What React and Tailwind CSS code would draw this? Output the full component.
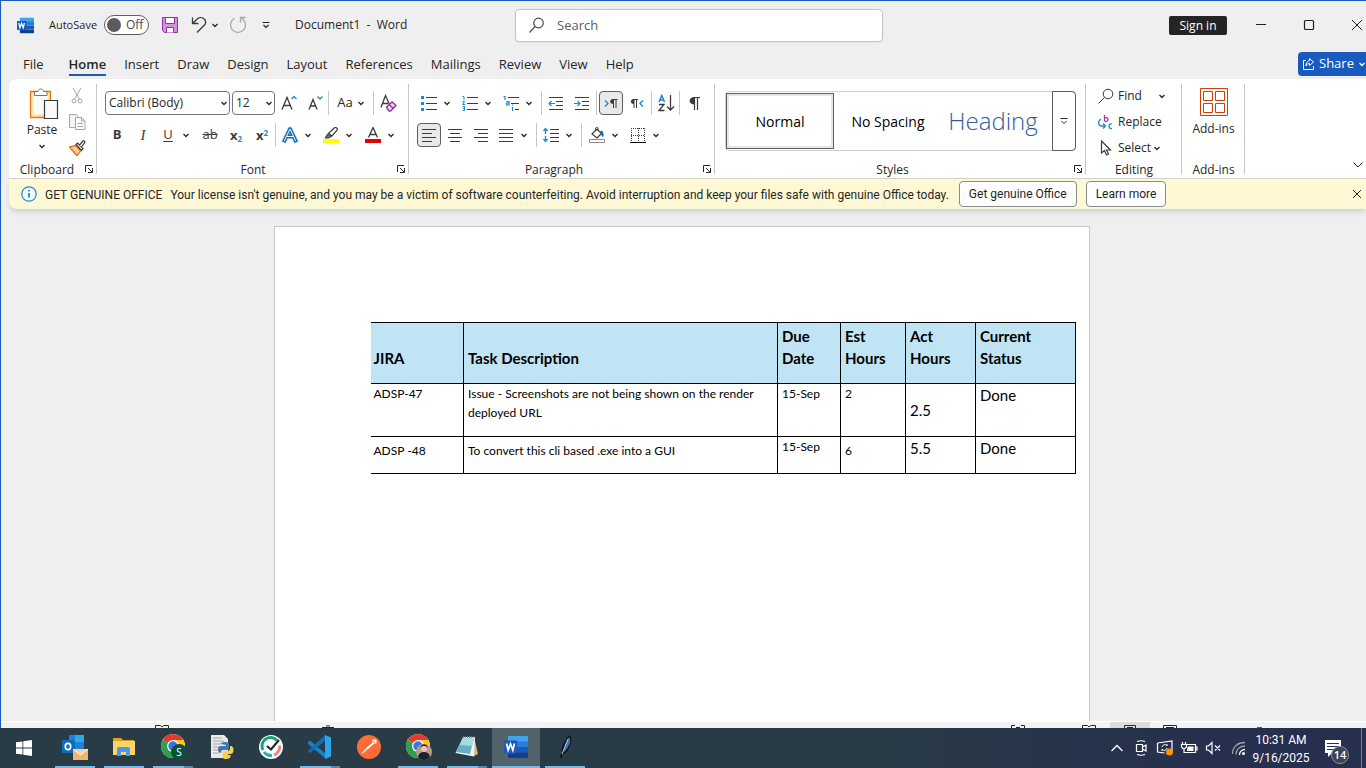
import React from "react";

const cn = (...parts) => parts.filter(Boolean).join(" ");

function Svg({ w = 16, h = 16, children, className, ...rest }) {
  return (
    <svg
      width={w}
      height={h}
      viewBox={`0 0 ${w} ${h}`}
      fill="none"
      stroke="#3b3b3b"
      aria-hidden="true"
      className={cn("shrink-0", className)}
      {...rest}
    >
      {children}
    </svg>
  );
}

const Chevron = ({ stroke = "#262626" }) => (
  <Svg w={8} h={8} stroke={stroke} strokeWidth="1.3">
    <path d="M1.5 3 4 5.5 6.5 3" />
  </Svg>
);

const Divider = ({ className }) => <span className={cn("h-6 w-px shrink-0 bg-[#c8c6c4]", className)} />;

function Tool({ label, children, active, className }) {
  return (
    <button
      type="button"
      aria-label={label}
      className={cn(
        "flex h-6 shrink-0 items-center justify-center",
        active ? "mr-px w-6 rounded border border-[#5f5f5f] bg-[#e9e9e9]" : "w-[26px]",
        className
      )}
    >
      {children}
    </button>
  );
}

function SplitTool({ label, children, className }) {
  return (
    <div className={cn("flex shrink-0", className)}>
      <button type="button" aria-label={label} className="flex h-6 w-6 items-center justify-center">
        {children}
      </button>
      <button type="button" aria-label={`${label} options`} className="flex h-6 w-3 items-center justify-center">
        <Chevron />
      </button>
    </div>
  );
}

function Launcher({ label }) {
  return (
    <button type="button" aria-label={label} className="absolute right-[3px] bottom-1">
      <Svg w={10} h={10} stroke="#262626">
        <path d="M1.5 8V1.5H8M4 4l4 4M8.5 4v4.500H4" />
      </Svg>
    </button>
  );
}

function Group({ label, className, launcher, children }) {
  return (
    <section className={cn("relative flex shrink-0 flex-col justify-between", className)}>
      <div className="pt-[7px]">{children}</div>
      <div className="text-center leading-4">{label}</div>
      {launcher && <Launcher label={`${launcher} settings`} />}
      <span className="absolute top-0 right-0 h-[90px] w-px bg-[#c8c6c4]" />
    </section>
  );
}

function Combo({ label, value, className }) {
  return (
    <div className={cn("relative shrink-0", className)}>
      <select
        aria-label={label}
        defaultValue={value}
        className="block h-6 w-full appearance-none rounded border border-[#767676] bg-white pl-[3px] text-[12px] text-[#262626]"
      >
        <option>{value}</option>
      </select>
      <span className="pointer-events-none absolute top-2 right-[2px]">
        <Chevron />
      </span>
    </div>
  );
}

function WordLogo({ size }) {
  return (
    <svg width={size} height={size} viewBox="0 0 24 24" aria-hidden="true" className="shrink-0">
      <path d="M5 1h18a1 1 0 0 1 1 1v5H4V2a1 1 0 0 1 1-1z" fill="#41a5ee" />
      <path d="M4 6.500h20V12H4z" fill="#2b7cd3" />
      <path d="M4 12h20v5.500H4z" fill="#185abd" />
      <path d="M4 17.500h20V22a1 1 0 0 1-1 1H5a1 1 0 0 1-1-1z" fill="#103f91" />
      <rect x="0" y="5.500" width="13" height="13" rx="1" fill="#185abd" />
      <path d="m2.500 8.500 1.700 6.500L6.500 9 8.800 15l1.700-6.500" fill="none" stroke="#fff" strokeWidth="1.800" />
    </svg>
  );
}

const Lines = ({ rows }) => (
  <Svg>
    <path d={rows.map(([a, b], i) => `M${a} ${2.5 + i * 4}H${b}`).join("")} />
  </Svg>
);

const alignRows = {
  left: [[1, 15], [1, 11], [1, 15], [1, 11]],
  center: [[1, 15], [3, 13], [1, 15], [3, 13]],
  right: [[1, 15], [5, 15], [1, 15], [5, 15]],
  justify: [[1, 15], [1, 15], [1, 15], [1, 15]],
};

function TitleBar() {
  return (
    <header className="relative flex h-12 shrink-0 items-center pl-4">
      <WordLogo size={17} />
      <span className="ml-[15px] w-[55px] text-[11px]">AutoSave</span>
      <button
        type="button"
        role="switch"
        aria-checked="false"
        aria-label="AutoSave"
        className="flex h-5 w-[45px] items-center gap-[5px] rounded-full border border-[#5f5f5f] bg-white pl-[2px] text-[12px] text-[#4a4a4a]"
      >
        <span className="size-3.5 rounded-full bg-[#5c5c5c]" />
        Off
      </button>
      <button type="button" aria-label="Save" className="ml-3">
        <Svg w={18} h={18} stroke="#9332a8">
          <path d="M1.500 1.500h15v15h-13l-2-2z" fill="#d590de" />
          <path d="M4.500 1.500h9v6h-9zM5.500 16.500v-5h7v5" fill="#fff" />
        </Svg>
      </button>
      <button type="button" aria-label="Undo" className="ml-3">
        <Svg w={16} h={18} strokeWidth="1.300">
          <path d="M1.500 1.500v6h6M1.800 7.200 6.500 2.800c2-1.800 5-1.600 6.700.2s1.700 4.500 0 6.300L6 16.500" />
        </Svg>
      </button>
      <button type="button" aria-label="Undo history" className="ml-1">
        <Chevron />
      </button>
      <button type="button" aria-label="Redo" disabled className="ml-[10px]">
        <Svg w={18} h={18} stroke="#a6a6a6" strokeWidth="1.300">
          <path d="M5.500 2.200a7.500 7.500 0 1 0 7 0M11.500 6.500v-5h5" />
        </Svg>
      </button>
      <button type="button" aria-label="Customize toolbar" className="ml-[14px]">
        <Svg w={10} h={10} stroke="#262626" strokeWidth="1.200">
          <path d="M1.500 2.500h7M2.500 5 5 7.500 7.500 5" />
        </Svg>
      </button>
      <h1 className="ml-6 text-[12px] whitespace-pre">Document1  -  Word</h1>
      <label className="absolute top-2 left-[514px] flex h-[33px] w-[368px] items-center gap-3 rounded border border-[#c4c4c4] bg-white pl-3 shadow-xs">
        <Svg w={17} h={17} stroke="#4a4a4a" strokeWidth="1.200">
          <circle cx="10.500" cy="6" r="4.800" />
          <path d="m7 9.500-5.500 6" />
        </Svg>
        <input
          type="search"
          aria-label="Search"
          placeholder="Search"
          className="min-w-0 flex-1 bg-transparent text-[13px] outline-none placeholder:text-[#5c5c5c]"
        />
      </label>
      <div className="ml-auto flex shrink-0 items-center">
        <button type="button" className="mr-6 h-[19px] w-[58px] rounded-[2px] bg-[#242424] text-[12px] leading-[19px] text-white">
          Sign in
        </button>
        <button type="button" aria-label="Minimize" className="mr-8 ml-[2px]">
          <Svg stroke="#1f1f1f">
            <path d="M3 7.500h10" />
          </Svg>
        </button>
        <button type="button" aria-label="Maximize" className="mr-8">
          <Svg stroke="#1f1f1f" strokeWidth="1.200">
            <rect x="3.500" y="3.500" width="9" height="9" rx="1" />
          </Svg>
        </button>
        <button type="button" aria-label="Close" className="mr-px">
          <Svg stroke="#1f1f1f">
            <path d="m3 3 10 10M13 3 3 13" />
          </Svg>
        </button>
      </div>
    </header>
  );
}

const tabs = ["File", "Home", "Insert", "Draw", "Design", "Layout", "References", "Mailings", "Review", "View", "Help"];

function TabStrip() {
  return (
    <nav className="flex h-[30px] shrink-0 items-start pl-[22px] text-[13px]">
      {tabs.map((tab) => (
        <button
          key={tab}
          type="button"
          className={cn(
            "h-[27px] border-b-2 pt-[5px] leading-5",
            tab === "Home" ? "border-[#185abd] font-semibold" : "border-transparent",
            tab === "File" ? "mr-[25px]" : "mr-[18px]"
          )}
        >
          {tab}
        </button>
      ))}
      <button
        type="button"
        className="mt-[3px] ml-auto flex h-6 w-[68px] items-center gap-1 rounded-l bg-[#185abd] pl-1 text-[13px] text-white"
      >
        <Svg w={13} h={14} stroke="#fff">
          <path d="M4 3.500H1.500v9h10V9M7.500 1.500l4 3.500-4 3.500v-2C5.500 6.500 4.500 7.500 4 9c0-3 1.500-5 3.500-5.500z" />
        </Svg>
        Share
        <Chevron stroke="#fff" />
      </button>
    </nav>
  );
}

function ClipboardGroup() {
  return (
    <Group label={<span className="pr-3">Clipboard</span>} className="w-[88px]" launcher="Clipboard">
      <div className="flex pl-4">
        <button type="button" className="flex w-[34px] flex-col items-center text-[12px] leading-4">
          <Svg w={30} h={32} className="-mt-[3px] ml-1">
            <path d="M1.500 3.500h20v26h-20z" fill="#fce3a6" stroke="#e07a10" strokeWidth="1.300" />
            <path d="M4.500 6.500h14v20h-14z" fill="#fafafa" stroke="none" />
            <path d="M5.500 7.500v-4H9c.5-3.500 5-3.500 5.500 0H18v4z" fill="#fff" stroke="#767676" />
            <path d="M15.500 12.500h13v18h-13z" fill="#fafafa" stroke="#3b3b3b" strokeWidth="1.200" />
          </Svg>
          <span className="mt-[2px] mb-1">Paste</span>
          <Chevron />
        </button>
        <div className="-mt-[3px] flex flex-col gap-[10px] pl-[10px]">
          <button type="button" aria-label="Cut" disabled>
            <Svg stroke="#a6a6a6">
              <path d="m4 0 6.500 11M12 0 5.500 11" />
              <circle cx="5" cy="13" r="2" />
              <circle cx="11" cy="13" r="2" />
            </Svg>
          </button>
          <button type="button" aria-label="Copy" disabled>
            <Svg w={17} stroke="#a6a6a6">
              <path d="M6.500 13.500h-6V.5h7l1.500 2" fill="#f5f5f5" />
              <path d="M6.500 3.500h6l3.500 3.500v8.500H6.500zM12.500 3.500V7H16M8.500 9.500H14M8.500 12.500H14" fill="#fafafa" />
            </Svg>
          </button>
          <button type="button" aria-label="Format Painter">
            <Svg w={17}>
              <path d="m.5 7 6-1.500 5 5.500-3.500 5z" fill="#fbd9a8" stroke="#e07a10" strokeWidth="1.300" />
              <path d="M3 10.500 5 8.500M5 12.500l2-2M6.500 14.500l2-2" stroke="#e07a10" />
              <path d="m7 4.500 1.500-1.500 5.500 5.500-1.500 2z" fill="#fff" strokeWidth="1.200" />
              <path d="m10.500 5 3.500-4c.8-.8 2.500.7 1.800 1.600L12.300 7" fill="#fff" strokeWidth="1.200" />
            </Svg>
          </button>
        </div>
      </div>
    </Group>
  );
}

function FontGroup() {
  return (
    <Group label="Font" className="w-[312px]" launcher="Font">
      <div className="flex items-center pl-2">
        <Combo label="Font" value="Calibri (Body)" className="mr-[2px] w-[125px]" />
        <Combo label="Font size" value="12" className="mr-px w-[43px]" />
        <Tool label="Increase font size">
          <Svg>
            <path d="m1 14.500 5-12 5 12M2.500 10.500h7" strokeWidth="1.300" />
            <path d="M10.500 4 13 1.500 15.500 4" stroke="#1e88d0" strokeWidth="1.300" />
          </Svg>
        </Tool>
        <Tool label="Decrease font size">
          <Svg>
            <path d="m2 14.500 4-10 4 10M3.500 11h5" strokeWidth="1.300" />
            <path d="M10.500 1.500 13 4l2.500-2.500" stroke="#1e88d0" strokeWidth="1.300" />
          </Svg>
        </Tool>
        <Divider />
        <button type="button" aria-label="Change case" className="mx-1 flex w-9 items-center justify-center gap-1 text-[13px]">
          <span>Aa</span>
          <Chevron />
        </button>
        <Divider />
        <Tool label="Clear formatting" className="ml-px">
          <Svg w={18} h={18}>
            <path d="m2 13.500 4.500-12 4 9M3.500 9.500h5.500" strokeWidth="1.300" />
            <path d="m7.500 13 5.500-5 4 3.500-5.500 5.500h-1.500z" fill="#f0d6f3" stroke="#9332a8" strokeWidth="1.400" />
            <path d="m10 10.500 4.500 4" stroke="#9332a8" strokeWidth="1.300" />
          </Svg>
        </Tool>
      </div>
      <div className="mt-2 flex items-center pl-[7px] text-[14px] text-[#3b3b3b]">
        <Tool label="Bold">
          <b className="text-[13px]">B</b>
        </Tool>
        <Tool label="Italic">
          <i className="font-['Liberation_Serif',serif] text-[15px]">I</i>
        </Tool>
        <SplitTool label="Underline" className="mr-[5px]">
          <span className="text-[13px] underline underline-offset-2">U</span>
        </SplitTool>
        <Tool label="Strikethrough">
          <span className="text-[13px] line-through">ab</span>
        </Tool>
        <Tool label="Subscript">
          <span className="text-[13px] leading-4 font-bold">
            x<sub className="text-[8px] text-[#1e88d0]">2</sub>
          </span>
        </Tool>
        <Tool label="Superscript">
          <span className="text-[13px] leading-4 font-bold">
            x<sup className="text-[8px] text-[#1e88d0]">2</sup>
          </span>
        </Tool>
        <Divider />
        <SplitTool label="Text effects" className="mr-[5px] ml-[2px]">
          <Svg w={18} h={18} strokeLinejoin="round" strokeLinecap="square">
            <path d="M3.500 14.500 9 3l5.500 11.500M6 10.500h6" stroke="#9ccdf0" strokeWidth="5" />
            <path d="M3.500 14.500 9 3l5.500 11.500M6 10.500h6" stroke="#1467b3" strokeWidth="3.400" />
            <path d="M3.500 14.500 9 3l5.500 11.500M6 10.500h6" stroke="#fff" strokeWidth="1" />
          </Svg>
        </SplitTool>
        <SplitTool label="Highlight color" className="mr-[6px]">
          <Svg>
            <path d="M0 12h16v4H0z" fill="#ffff00" stroke="none" />
            <path d="m5.500 6.500 6-5.700c1.500-1 3.500.8 2.500 2.300L9 9z" fill="#fff" strokeWidth="1.200" />
            <path d="m5 6.500 3.500 3-3 1.500H2z" fill="#6b6b6b" />
          </Svg>
        </SplitTool>
        <SplitTool label="Font color">
          <Svg>
            <path d="M0 12h16v4H0z" fill="#e60000" stroke="none" />
            <path d="M3.500 10.500 8 .5l4.500 10M5 7.500h6" strokeWidth="1.300" />
          </Svg>
        </SplitTool>
      </div>
    </Group>
  );
}

function ParagraphGroup() {
  return (
    <Group label={<span className="pr-4">Paragraph</span>} className="w-[306px]" launcher="Paragraph">
      <div className="flex items-center pl-2">
        <SplitTool label="Bullets" className="mr-[5px]">
          <Svg>
            <path d="M0 1h3v3H0zM0 7h3v3H0zM0 13h3v3H0z" fill="#1e88d0" stroke="none" />
            <path d="M5 2.500h11M5 8.500h11M5 14.500h11" />
          </Svg>
        </SplitTool>
        <SplitTool label="Numbering" className="mr-[5px]">
          <Svg>
            <path d="M.5 1.500H2V5M.5 6.500h2L.5 9.500h2.500M.5 11.500h2v4h-2M1 13.500h1.500" stroke="#1e88d0" />
            <path d="M5 2.500h11M5 8.500h11M5 14.500h11" />
          </Svg>
        </SplitTool>
        <SplitTool label="Multilevel list">
          <Svg>
            <path d="M.5 1.500H2V5M3.500 6.500h2.500v3.500H3.500v-2H6M9.500 12v4M9.500 9.500v1" stroke="#1e88d0" strokeWidth="1.200" />
            <path d="M5 2.500h11M8 8.500h8M12 14.500h4" />
          </Svg>
        </SplitTool>
        <Divider className="mr-px ml-[6px]" />
        <Tool label="Decrease indent">
          <Svg>
            <path d="M1 2.500h14M8 6.500h7M8 10.500h7M1 14.500h14" />
            <path d="M7 8.500H1M3.500 6 1 8.500 3.500 11" stroke="#1e88d0" strokeWidth="1.200" />
          </Svg>
        </Tool>
        <Tool label="Increase indent">
          <Svg>
            <path d="M1 2.500h14M8 6.500h7M8 10.500h7M1 14.500h14" />
            <path d="M0 8.500h6M3.500 6 6 8.500 3.500 11" stroke="#1e88d0" strokeWidth="1.200" />
          </Svg>
        </Tool>
        <Divider className="mr-[2px] ml-px" />
        <Tool label="Left-to-right" active>
          <Svg>
            <path d="M2 5.500 5 8.500l-3 3" stroke="#1e88d0" strokeWidth="1.400" />
            <path d="M10.500 13V4.500M13 13V4.500M9 4.500h5.500" />
            <path d="M10.500 9C6 9 6 4 10.500 4z" fill="#3b3b3b" stroke="none" />
          </Svg>
        </Tool>
        <Tool label="Right-to-left">
          <Svg>
            <path d="M14 5.500 11 8.500l3 3" stroke="#1e88d0" strokeWidth="1.400" />
            <path d="M5 13V4.500M7.500 13V4.500M4 4.500h5" />
            <path d="M5 9C.8 9 .8 4 5 4z" fill="#3b3b3b" stroke="none" />
          </Svg>
        </Tool>
        <Divider className="mx-px" />
        <Tool label="Sort">
          <Svg w={18} h={18}>
            <path d="m2 8 2.800-6.500L7.500 8M3 6h4" stroke="#1e88d0" strokeWidth="1.500" />
            <path d="M2 10.500h5l-5 6h5.500M13.500 1v15M10 12.500l3.500 3.500 3.500-3.500" strokeWidth="1.300" />
          </Svg>
        </Tool>
        <Divider className="mr-px" />
        <Tool label="Show paragraph marks">
          <Svg>
            <path d="M8.500 15V2.500M11.500 15V2.500M7 2.500h7" strokeWidth="1.200" />
            <path d="M8.500 9.500C2 9.500 2 2 8.500 2z" fill="#3b3b3b" stroke="none" />
          </Svg>
        </Tool>
      </div>
      <div className="mt-2 flex items-center pl-2">
        <Tool label="Align left" active>
          <Lines rows={alignRows.left} />
        </Tool>
        <Tool label="Center">
          <Lines rows={alignRows.center} />
        </Tool>
        <Tool label="Align right">
          <Lines rows={alignRows.right} />
        </Tool>
        <SplitTool label="Justify">
          <Lines rows={alignRows.justify} />
        </SplitTool>
        <Divider className="mr-[2px] ml-[6px]" />
        <SplitTool label="Line spacing">
          <Svg>
            <path d="M7 2.500h9M7 6.500h9M7 10.500h9M7 14.500h9" />
            <path d="M2.500 1.500v5.500M.5 4l2-2.500 2 2.500M2.500 9v5.500M.5 12l2 2.500 2-2.500" stroke="#1e88d0" strokeWidth="1.300" />
          </Svg>
        </SplitTool>
        <Divider className="mr-[3px] ml-[6px]" />
        <SplitTool label="Shading" className="mr-[5px]">
          <Svg>
            <path d="M.5 12.500h15v3H.5z" fill="#fff" stroke="#8a8a8a" />
            <path d="m3 7 5-5 4.500 4.500L8 11z" fill="#fff" strokeWidth="1.200" />
            <path d="M6.500 4V1.500c0-1.500 2.500-1.500 2.500 0V4" />
            <path d="M11.500 3.500c2.500 0 3.500 3 3 6-1.500 1-2-1.500-3-3z" fill="#1467b3" stroke="none" />
          </Svg>
        </SplitTool>
        <SplitTool label="Borders">
          <Svg>
            <path d="M1 1.500h14M1 8.500h14M1.500 1v13M8.500 1v13M14.500 1v13" strokeDasharray="1 1" />
            <path d="M0 15.500h16" stroke="#000" />
          </Svg>
        </SplitTool>
      </div>
    </Group>
  );
}

function StylesGroup() {
  return (
    <Group label={<span className="pr-4">Styles</span>} className="w-[371px]" launcher="Styles">
      <div className="mx-[10px] flex h-[60px] rounded border border-[#d0d0d0] text-[14px] text-black">
        <button type="button" className="my-px h-14 w-[108px] border border-[#5f5f5f] bg-white p-0 outline-2 -outline-offset-3 outline-[#e6e6e6]">
          Normal
        </button>
        <button type="button" className="w-[108px]">
          No Spacing
        </button>
        <button
          type="button"
          className="flex-1 pr-2 text-center text-[24px] font-light text-[#2f5d9e]"
        >
          Heading
        </button>
        <button
          type="button"
          aria-label="More styles"
          className="-my-px -mr-px flex w-6 items-center justify-center rounded-r border border-[#5f5f5f]"
        >
          <Svg w={10} h={10} stroke="#262626">
            <path d="M1.500 2.500h7M2.500 5 5 7.500 7.500 5" />
          </Svg>
        </button>
      </div>
    </Group>
  );
}

function EditingGroup() {
  const row = "flex h-[26px] w-full items-center pl-3 text-[12px]";
  return (
    <Group label="Editing" className="w-[96px]">
      <div className="-mt-2">
        <button type="button" className={row}>
          <Svg className="mr-1">
            <circle cx="10" cy="6" r="4.800" />
            <path d="m6.500 9.500-6 6" />
          </Svg>
          Find
          <span className="ml-4">
            <Chevron />
          </span>
        </button>
        <button type="button" className={row}>
          <Svg className="mr-1" strokeWidth="1.300">
            <path d="M6.500 1v6.500M6.500 4.500c1-1.500 3.500-1 3.500 1s-2.500 2.500-3.500 1" stroke="#a33bb5" />
            <path d="M14 10c-4-1.500-4 5.500 0 4.500" stroke="#1e88d0" />
            <path d="M3 5C-.5 7 0 12 3.500 12H7M5 9.500 7.500 12 5 14.500" stroke="#1e88d0" />
          </Svg>
          Replace
        </button>
        <button type="button" className={row}>
          <Svg className="mr-1">
            <path d="M3.500 1v12l3-2.500 2 4.500 2-1-2-4h4z" fill="#fff" strokeWidth="1.200" />
          </Svg>
          <span className="mr-[2px]">Select</span>
          <Chevron />
        </button>
      </div>
    </Group>
  );
}

function AddInsGroup() {
  return (
    <Group label="Add-ins" className="w-[63px]">
      <button type="button" className="-mt-[3px] flex w-full flex-col items-center gap-[5px] text-[12px] leading-4">
        <Svg w={28} h={28} stroke="#d83b01">
          <path d="M.5.5h27v27H.5zM3.500 3.500h9v9h-9zM15.500 3.500h9v9h-9zM3.500 15.500h9v9h-9zM15.500 15.500h9v9h-9z" />
        </Svg>
        Add-ins
      </button>
    </Group>
  );
}

function LicenseBar() {
  const button = "h-[26px] rounded border border-[#8a8a8a] bg-white px-[9px] text-[#1f1f1f]";
  return (
    <div
      role="alert"
      className="relative ml-2 flex h-[31px] shrink-0 items-center rounded-bl-lg border-t border-[#d2d0c8] bg-[#fff8d5] pl-3 font-['Roboto','Noto_Sans',sans-serif] text-[12px] whitespace-nowrap shadow-md"
    >
      <Svg stroke="#1e88d0" strokeWidth="1.200" className="mr-2">
        <circle cx="8" cy="8" r="7.200" fill="#f4faff" />
        <path d="M8 7v4.500M8 4v1.500" strokeWidth="1.800" />
      </Svg>
      <span className="mr-2 pt-[2px]">GET GENUINE OFFICE</span>
      <span className="mr-[10px] pt-[2px]">
        Your license isn't genuine, and you may be a victim of software counterfeiting. Avoid interruption and keep your
        files safe with genuine Office today.
      </span>
      <button type="button" className={cn(button, "mr-[9px]")}>
        Get genuine Office
      </button>
      <button type="button" className={button}>
        Learn more
      </button>
      <button type="button" aria-label="Dismiss message" className="ml-auto pr-px">
        <Svg stroke="#262626">
          <path d="m4 4 8 8M12 4l-8 8" />
        </Svg>
      </button>
    </div>
  );
}

function Document() {
  const th = "border border-black px-1 text-left align-top text-[15px] leading-[22px] font-bold";
  const td = "border border-black px-1 align-top text-[12px] leading-[19px]";
  const big = "border border-black px-1 align-top text-[15px] leading-[22px]";
  return (
    <main className="min-h-0 flex-1 overflow-hidden pt-[17px] pr-1">
      <article className="mx-auto h-full w-[816px] border border-b-0 border-[#c6c6c6] bg-white px-24 pt-[95px] font-['Lato','Noto_Sans',sans-serif] text-black">
        <table className="w-[705px] table-fixed border-collapse">
          <colgroup>
            <col className="w-[93px]" />
            <col className="w-[314px]" />
            <col className="w-[63px]" />
            <col className="w-[65px]" />
            <col className="w-[70px]" />
            <col className="w-[100px]" />
          </colgroup>
          <thead>
            <tr className="h-[61px] bg-[#c1e4f5]">
              <th className={cn(th, "border-l-0 pt-6 pl-[3px]")}>JIRA</th>
              <th className={cn(th, "pt-6")}>Task Description</th>
              <th className={cn(th, "pt-[2px]")}>Due Date</th>
              <th className={cn(th, "pt-[2px]")}>Est Hours</th>
              <th className={cn(th, "pt-[2px]")}>Act Hours</th>
              <th className={cn(th, "pt-[2px]")}>Current Status</th>
            </tr>
          </thead>
          <tbody>
            <tr className="h-[53px]">
              <td className={cn(td, "border-l-0 pl-[3px]")}>ADSP-47</td>
              <td className={td}>Issue - Screenshots are not being shown on the render deployed URL</td>
              <td className={td}>15-Sep</td>
              <td className={td}>2</td>
              <td className={cn(big, "pt-[15px]")}>2.5</td>
              <td className={big}>Done</td>
            </tr>
            <tr className="h-[37px]">
              <td className={cn(td, "border-l-0 pt-1 pl-[3px]")}>ADSP -48</td>
              <td className={cn(td, "pt-1")}>To convert this cli based .exe into a GUI</td>
              <td className={td}>15-Sep</td>
              <td className={cn(td, "pt-1")}>6</td>
              <td className={big}>5.5</td>
              <td className={big}>Done</td>
            </tr>
          </tbody>
        </table>
      </article>
    </main>
  );
}

function StatusBar() {
  return (
    <footer className="flex h-[7px] shrink-0 items-end border-t border-white bg-[#f3f3f3] pl-[154px]">
      <Svg w={14} h={3} stroke="#262626">
        <path d="M.5 3V.5h5L7 2 8.500.5h5V3" />
      </Svg>
      <Svg w={12} h={3} stroke="#262626" className="ml-[153px]">
        <path d="M0 2.500h12M4 1.500l2-1 2 1" />
      </Svg>
      <div className="ml-auto flex items-end pr-[104px]">
        <Svg w={14} h={3} stroke="#262626" className="mr-[57px]">
          <path d="M.5 3V.5H4M10 .5h3.500V3M5 2.500h4" />
        </Svg>
        <Svg w={14} h={3} stroke="#262626" className="mr-[14px]">
          <path d="M.5 3V.5h5L7 2 8.500.5h5V3" />
        </Svg>
        <span className="mr-[13px] flex h-[6px] w-10 items-end justify-center bg-[#dcdcdc]">
          <Svg w={12} h={3} stroke="#262626">
            <path d="M.5 3V.5h11V3M3 2.500h6" />
          </Svg>
        </span>
        <Svg w={14} h={3} stroke="#262626" className="mr-[80px]">
          <path d="M.5 3V.5h13V3M3 2.500h8" />
        </Svg>
        <span className="h-px w-[5px] bg-[#555]" />
      </div>
    </footer>
  );
}

function Chrome({ children }) {
  return (
    <svg width="28" height="28" viewBox="0 0 28 28" aria-hidden="true">
      <circle cx="14" cy="13" r="12" fill="#fff" />
      <path d="M14 13 3.600 7A12 12 0 0 1 24.400 7z" fill="#e33b2e" />
      <path d="M14 13 24.400 7A12 12 0 0 1 14 25z" fill="#fcc31e" />
      <path d="M14 13v12A12 12 0 0 1 3.600 7z" fill="#2da04e" />
      <path d="M14 7h10.400L20 15z" fill="#fcc31e" />
      <circle cx="14" cy="13" r="6" fill="#fff" />
      <circle cx="14" cy="13" r="4.700" fill="#3578e5" />
      {children}
    </svg>
  );
}

const apps = [
  {
    name: "Outlook",
    open: true,
    icon: (
      <svg width="28" height="28" viewBox="0 0 28 28" aria-hidden="true">
        <path d="M8 2h15v16H8z" fill="#1066b5" />
        <path d="M14 2h9v8h-9z" fill="#32a9e7" />
        <path d="M8 2h6v6H8zM14 9h9v7h-9z" fill="#1b84d4" />
        <path d="M1 7h12v13H1z" fill="#0f6cbd" />
        <ellipse cx="7" cy="13.500" rx="2.700" ry="3.200" fill="none" stroke="#fff" strokeWidth="1.700" />
        <path d="M12 16h15v11H12z" fill="#eab676" />
        <path d="m12 16 7.500 6 7.500-6" fill="#f7cf98" stroke="#fff" />
      </svg>
    ),
  },
  {
    name: "File Explorer",
    open: true,
    icon: (
      <svg width="24" height="24" viewBox="0 0 24 24" aria-hidden="true">
        <path d="M1 3h8l2 2h11v5H1z" fill="#e0a018" />
        <path d="M1 6h22v14H1z" fill="#fbd46b" />
        <path d="M5 21v-7q0-2 2-2h9q2 0 2 2v7h-4v-4H9v4z" fill="#4a9be0" />
      </svg>
    ),
  },
  {
    name: "Chrome",
    open: true,
    stacked: true,
    icon: (
      <Chrome>
        <circle cx="20" cy="19" r="8" fill="#0b4f43" />
        <text x="20" y="22.500" textAnchor="middle" fontSize="10" fill="#fff" fontFamily="Noto Sans, sans-serif">
          S
        </text>
      </Chrome>
    ),
  },
  {
    name: "Python",
    icon: (
      <svg width="26" height="26" viewBox="0 0 26 26" aria-hidden="true">
        <path d="M2 1h13l4 4v19H2z" fill="#e9e9e9" />
        <path d="M4 4h9M4 7h11M4 10h8M4 13h6M4 16h6M4 19h6" stroke="#a8a8a8" />
        <path d="M12 10q0-2 4-2t4 2v4q0 2-2 2h-4q-2 0-2 3-3 0-3-4 0-3 3-3h5v-1z" fill="#3b77ab" />
        <path d="M21 12q4 0 3.500 4.500-.5 3.500-3 3.500h-3v1h3v2q-1 2-4 2-4 0-4-2v-3q0-3 2-3h3q2.500 0 2.500-3z" fill="#f8d04b" />
      </svg>
    ),
  },
  {
    name: "Tasks",
    icon: (
      <svg width="26" height="26" viewBox="0 0 26 26" aria-hidden="true" fill="none">
        <circle cx="13" cy="13" r="12" fill="#fff" />
        <path d="M19 6.500A8.500 8.500 0 0 0 5 16" stroke="#12a66d" strokeWidth="3" />
        <path d="M6 18a8.500 8.500 0 0 0 8 3.500" stroke="#1ab6b6" strokeWidth="3" />
        <path d="M16 21a8.500 8.500 0 0 0 5.500-9.500" stroke="#ec8585" strokeWidth="3" />
        <path d="m9 12 4 3.500L21 6" stroke="#1f2b33" strokeWidth="2.200" />
      </svg>
    ),
  },
  {
    name: "Visual Studio Code",
    open: true,
    stacked: true,
    icon: (
      <svg width="26" height="26" viewBox="0 0 26 26" aria-hidden="true">
        <path d="m1 8 2-1.500L19 20v5L1 10z" fill="#1b80c8" />
        <path d="M1 17 18 1v6L3 19l-2-1.500z" fill="#1070b3" />
        <path d="m18 1 6 2.500v19L18 25z" fill="#2aa5f0" />
      </svg>
    ),
  },
  {
    name: "Postman",
    icon: (
      <svg width="26" height="26" viewBox="0 0 26 26" aria-hidden="true">
        <circle cx="13" cy="13" r="12" fill="#ff6c37" />
        <circle cx="18.500" cy="7.500" r="2.300" fill="#fff" />
        <path d="m16.500 9-6.500 5.500-4 5 4.500-3.500 7-6z" fill="#fff" stroke="#fff" strokeWidth=".6" />
        <path d="m9.500 14.500 2 2M17 7.500l2 1" stroke="#ff6c37" strokeWidth=".8" />
      </svg>
    ),
  },
  {
    name: "Chrome, second profile",
    open: true,
    icon: (
      <Chrome>
        <circle cx="20" cy="19" r="8" fill="#b99a8d" />
        <circle cx="20" cy="15.500" r="3.200" fill="#e8c3ae" />
        <path d="M16.500 15c0-5 7-5 7 0l-2-2h-3z" fill="#38241f" />
        <path d="M14 24q1-5 6-5t6 5q-2 3-6 3t-6-3z" fill="#1d2227" />
      </Chrome>
    ),
  },
  {
    name: "Notepad",
    open: true,
    stacked: true,
    icon: (
      <svg width="26" height="26" viewBox="0 0 26 26" aria-hidden="true">
        <path d="m20 3 4 17-4 2z" fill="#d8b873" />
        <path d="M9 3h12l-1 19.500L1.500 19z" fill="#eef6f7" />
        <path d="M9 4h11l-4 16-14-2z" fill="#62b1bd" />
        <path d="M9 4h11l-2 8-12-1z" fill="#a6dbe2" />
        <path d="M9 3h12" stroke="#777" strokeDasharray="1 1" strokeWidth="2" />
      </svg>
    ),
  },
  { name: "Word", open: true, active: true, icon: <WordLogo size={24} /> },
  {
    name: "Tk application",
    open: true,
    icon: (
      <svg width="26" height="26" viewBox="0 0 26 26" aria-hidden="true">
        <path d="M18 1q3 5-1 13-3 6-6 6-3-4 1-11 3-6 6-8z" fill="#0c1219" />
        <path d="M17 3q3 4-1 10-2 4-4 5-1-2 1-7z" fill="#3a73b4" />
        <path d="M16 5 10.500 19l-1 5" fill="none" stroke="#d5dde5" strokeWidth=".9" />
        <path d="m10 20-1 4" stroke="#0c1219" strokeWidth="2" />
      </svg>
    ),
  },
];

function TrayButton({ label, children }) {
  return (
    <button type="button" aria-label={label} className="flex h-10 w-6 items-center justify-center">
      {children}
    </button>
  );
}

function Taskbar() {
  return (
    <div className="flex h-10 shrink-0 bg-linear-to-r from-[#293c45] from-60% to-[#262f4e] to-90% text-white">
      <button type="button" aria-label="Start" className="flex w-12 items-center justify-center">
        <svg width="16" height="16" viewBox="0 0 16 16" fill="#fff" aria-hidden="true">
          <path d="m0 2.300 6.500-.9v6.200H0zM7.300 1.300 16 0v7.600H7.300zM0 8.400h6.500v6.200L0 13.700zM7.300 8.400H16V16l-8.700-1.300z" />
        </svg>
      </button>
      <div className="ml-[3px] flex gap-px">
        {apps.map((app) => (
          <button
            key={app.name}
            type="button"
            aria-label={app.name}
            className={cn("flex w-12 flex-col items-center", app.active && "bg-[#53636c]")}
          >
            <span className="flex h-[38px] items-center">{app.icon}</span>
            {app.open && (
              <span className={cn("flex h-[2px] bg-[#76b9ed]", app.active ? "w-full" : "w-10")}>
                {app.stacked && <span className="ml-auto h-[2px] w-[9px] bg-[#5587b3]" />}
              </span>
            )}
          </button>
        ))}
      </div>
      <div className="ml-auto flex shrink-0">
        <TrayButton label="Show hidden icons">
          <Svg stroke="#fff" strokeWidth="1.300">
            <path d="m2.500 11 5.500-5.500 5.500 5.500" />
          </Svg>
        </TrayButton>
        <TrayButton label="Meet now">
          <Svg stroke="#fff">
            <path d="M3.500 4.500h6v7h-6zM9.500 7 13 5v6L9.500 9M4 1.500Q8 0 12 1.500M4 14.500q4 1.500 8 0" strokeWidth="1.200" />
          </Svg>
        </TrayButton>
        <TrayButton label="Windows Update">
          <Svg w={18} stroke="#fff">
            <path d="m1.500 3 14.500-2v10M1.500 3v9l7 1" strokeWidth="1.200" />
            <path d="M6 7c1-3 4-3 5-1V4M11 8c-1 3-4 3-5 1v2" />
            <circle cx="13.500" cy="12" r="3.500" fill="#ff9500" stroke="none" />
          </Svg>
        </TrayButton>
        <TrayButton label="Battery">
          <Svg w={18} stroke="#fff">
            <path d="M7 4.500h8.500v8H5.500M15.500 7h1.500v3h-1.500M2.500 2v2M5.500 2v2M1.500 4.500h5V7L5 8.500H3L1.500 7zM4 8.500v4h2" strokeWidth="1.200" />
            <path d="M8 6.500h5.500V11H7V9z" fill="#fff" stroke="none" />
          </Svg>
        </TrayButton>
        <TrayButton label="Volume muted">
          <Svg stroke="#fff">
            <path d="M1.500 6h2L7 2.500v11L3.500 10h-2zM10 5.500l5 5M15 5.500l-5 5" strokeWidth="1.200" />
          </Svg>
        </TrayButton>
        <span className="ml-[2px] flex">
          <TrayButton label="Wi-Fi">
            <Svg stroke="#9da5b3" strokeWidth="1.300">
              <path d="M1.500 14C1.500 7 6.500 2.500 14 2.500M5 14.500C5 9.500 8.500 6 14 6" />
              <path d="M8.500 15c0-3.500 2.500-5.500 5.500-5.500" stroke="#fff" />
              <circle cx="12.500" cy="13.500" r="1.500" fill="#fff" stroke="none" />
            </Svg>
          </TrayButton>
        </span>
        <button type="button" className="w-[60px] pt-[2px] text-center font-['Roboto','Noto_Sans',sans-serif] text-[12px] leading-[18px] whitespace-nowrap">
          10:31 AM
          <br />
          9/16/2025
        </button>
        <button type="button" aria-label="Notifications" className="relative ml-[10px] w-[40px]">
          <Svg w={18} h={18} className="absolute top-3 left-[3px]" stroke="none">
            <path d="M1 0h16v13H8l-4 4v-4H1z" fill="#fff" />
            <path d="M3 3.500h12M3 6.500h12M3 9.500h9" stroke="#263150" />
          </Svg>
          <span className="absolute top-[18px] left-[10px] size-[18px] rounded-full border border-[#8a919b] bg-[#3b4450] text-[11px] leading-4 font-semibold">
            14
          </span>
        </button>
        <span className="mr-1 h-10 w-px bg-[#7b8296]" />
      </div>
    </div>
  );
}

export default function App() {
  return (
    <div className="flex h-screen flex-col overflow-hidden bg-[#efefef] font-['Open_Sans','Noto_Sans',sans-serif] text-[12px] text-[#262626]">
      <div className="flex min-h-0 flex-1 flex-col border-t border-l border-[#185abd]">
        <TitleBar />
        <TabStrip />
        <div className="ml-2 flex h-[99px] shrink-0 rounded-tl-lg bg-white pt-[5px] text-[12px] whitespace-nowrap">
          <ClipboardGroup />
          <FontGroup />
          <ParagraphGroup />
          <StylesGroup />
          <EditingGroup />
          <AddInsGroup />
          <button type="button" aria-label="Collapse ribbon" className="mt-auto mr-[2px] mb-2 ml-auto">
            <Svg w={12} h={10} stroke="#262626">
              <path d="m1.500 2.500 4.500 4.500 4.500-4.500" />
            </Svg>
          </button>
        </div>
        <LicenseBar />
        <Document />
        <StatusBar />
      </div>
      <Taskbar />
    </div>
  );
}
